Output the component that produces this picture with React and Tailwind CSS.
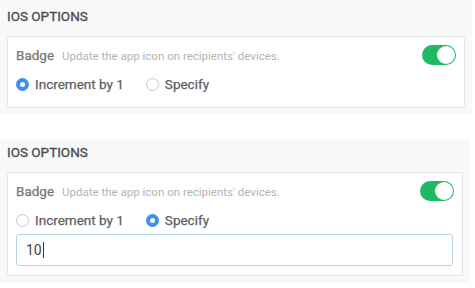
import React, { useState } from 'react';

function Radio({ checked, label, onClick }) {
  return (
    <button type="button" onClick={onClick} className="flex items-center gap-[6px] h-4">
      {checked ? (
        <span className="w-[13px] h-[13px] rounded-full bg-[#3d8ff0] flex items-center justify-center">
          <span className="w-[5px] h-[5px] rounded-full bg-white" />
        </span>
      ) : (
        <span className="w-[13px] h-[13px] rounded-full border border-[#c8c8c8] bg-white" />
      )}
      <span className="text-[13.5px] text-[#5f5f5f] leading-4 [-webkit-text-stroke:0.25px_#5f5f5f]">{label}</span>
    </button>
  );
}

function Toggle({ on }) {
  return (
    <div className={`w-[34px] h-5 rounded-full p-px flex ${on ? 'bg-[#1fb863] justify-end' : 'bg-[#ddd] justify-start'}`}>
      <span className="w-[18px] h-[18px] rounded-full bg-white" />
    </div>
  );
}

function OptionsCard({ initial, showInput, top, cardPb }) {
  const [mode, setMode] = useState(initial);
  return (
    <section className={`bg-[#f8f8f8] px-[7px] ${top}`}>
      <h2 className="text-[13.5px] text-[#4a4a4a] leading-4 [-webkit-text-stroke:0.3px_#4a4a4a]">IOS OPTIONS</h2>
      <div className={`mt-[12px] bg-white border border-[#e6e6e6] rounded-[3px] pl-[8px] pr-[8px] pt-[8px] ${cardPb}`}>
        <div className="flex items-center justify-between h-5">
          <div className="flex items-baseline gap-[8px]">
            <span className="text-[13.5px] text-[#777] [-webkit-text-stroke:0.25px_#777]">Badge</span>
            <span className="text-[11.5px] text-[#b3b3b3]">Update the app icon on recipients' devices.</span>
          </div>
          <Toggle on />
        </div>
        <div className="flex items-center gap-[22px] mt-[11px]">
          <Radio checked={mode === 'inc'} label="Increment by 1" onClick={() => setMode('inc')} />
          <Radio checked={mode === 'spec'} label="Specify" onClick={() => setMode('spec')} />
        </div>
        {showInput && (
          <div className="mt-[6px] mr-[1px] h-8 border border-[#b9d5e2] rounded-[3px] flex items-center px-[9px]">
            <span className="text-[14px] text-[#444]">10</span>
            <span className="w-px h-[16px] bg-[#333] ml-px" />
          </div>
        )}
      </div>
    </section>
  );
}

export default function App() {
  return (
    <div className="w-[475px] h-[288px] bg-white overflow-hidden" style={{ fontFamily: 'Roboto, "Noto Sans", sans-serif' }}>
      <div className="w-[472px]">
        <OptionsCard initial="inc" top="pt-[8px] pb-[5px] h-[113px]" cardPb="pb-[15px]" />
      </div>
      <div className="w-[470px] mt-[27px]">
        <OptionsCard initial="spec" showInput top="pt-[4px] pb-[6px] h-[143px]" cardPb="pb-[9px]" />
      </div>
    </div>
  );
}
